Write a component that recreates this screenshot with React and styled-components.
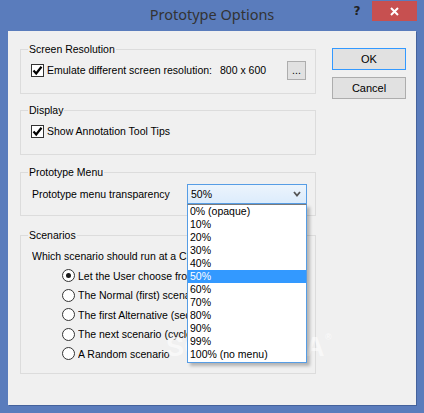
import React from 'react';
import styled, { createGlobalStyle } from 'styled-components';

const GlobalStyle = createGlobalStyle`
  body {
    margin: 0;
    font-family: "Liberation Sans", Arial, sans-serif;
  }
`;

const Window = styled.div`
  width: 424px;
  height: 413px;
  background: #5a7cbc;
  display: flex;
  flex-direction: column;
  box-sizing: border-box;
  padding-bottom: 8px;
`;

const TitleBar = styled.div`
  height: 31px;
  display: grid;
  grid-template-columns: 1fr auto 1fr;
  align-items: start;
`;

const Title = styled.div`
  font-family: "Noto Sans", "Open Sans", sans-serif;
  font-size: 14.5px;
  color: #333;
  padding-top: 4px;
  grid-column: 2;
`;

const Controls = styled.div`
  grid-column: 3;
  display: flex;
  justify-content: flex-end;
  align-items: flex-start;
  padding-top: 1px;
  padding-right: 7px;
`;

const HelpButton = styled.div`
  width: 20px;
  height: 20px;
  margin-right: 5px;
  display: flex;
  align-items: center;
  justify-content: center;
  font-family: "DejaVu Sans", sans-serif;
  font-weight: bold;
  font-size: 12px;
  color: #222;
`;

const CloseButton = styled.div`
  width: 45px;
  height: 20px;
  background: #c75050;
  display: flex;
  align-items: center;
  justify-content: center;
`;

const Client = styled.div`
  flex: 1;
  margin: 0 8px;
  background: #f0f0f0;
  display: flex;
  gap: 16px;
  padding: 18px 0 0 12px;
  position: relative;
  box-shadow: 1px 1px 0 #44629c;
  font-size: 10.5px;
  color: #000;
`;

const LeftColumn = styled.div`
  width: 296px;
  display: flex;
  flex-direction: column;
`;

const RightColumn = styled.div`
  width: 74px;
  display: flex;
  flex-direction: column;
  gap: 7px;
`;

const Group = styled.div`
  position: relative;
  box-sizing: border-box;
  border: 1px solid #dcdcdc;
  margin-top: ${p => p.$top}px;
  height: ${p => p.$height}px;
  padding: 10px 0 0 10px;
  z-index: ${p => p.$layer || 'auto'};
`;

const GroupLabel = styled.span`
  position: absolute;
  top: -7px;
  left: 7px;
  padding: 0 1px;
  background: #f0f0f0;
  line-height: 13px;
`;

const Row = styled.div`
  height: 20px;
  display: flex;
  align-items: center;
  padding-left: ${p => p.$indent || 0}px;
  white-space: nowrap;
`;

const RadioRow = styled(Row)`
  height: 19.5px;
  padding-left: 31px;
`;

const Box = styled.span`
  width: 13px;
  height: 13px;
  box-sizing: border-box;
  border: 1px solid #333;
  background: #fff;
  margin-right: 3px;
  display: flex;
  align-items: center;
  justify-content: center;
  flex: none;
`;

const Circle = styled(Box)`
  border-radius: 50%;
`;

const Dot = styled.span`
  width: 5px;
  height: 5px;
  border-radius: 50%;
  background: #1a1a1a;
`;

const FixedText = styled.span`
  display: inline-block;
  width: ${p => p.$width}px;
  flex: none;
`;

/* text that runs under the open drop-down list is cut at its left edge */
const ClippedText = styled.span`
  display: inline-block;
  max-width: ${p => p.$width}px;
  overflow: hidden;
  white-space: nowrap;
`;

const SmallButton = styled.div`
  width: 19px;
  height: 19px;
  box-sizing: border-box;
  border: 1px solid #adadad;
  background: #e1e1e1;
  display: flex;
  align-items: center;
  justify-content: center;
  line-height: 1;
`;

const Button = styled.div`
  height: 22px;
  box-sizing: border-box;
  border: 1px solid ${p => (p.$default ? '#3399ff' : '#adadad')};
  background: #e1e1e1;
  display: flex;
  align-items: center;
  justify-content: center;
  font-size: 11px;
`;

const SelectWrap = styled.div`
  position: relative;
  width: 120px;
  height: 20px;
`;

const Select = styled.div`
  width: 100%;
  height: 100%;
  box-sizing: border-box;
  border: 1px solid #569de5;
  background: linear-gradient(#ecf4fc, #dcecfc);
  display: flex;
  align-items: center;
  justify-content: space-between;
  padding: 0 5px 0 3px;
`;

const List = styled.div`
  position: absolute;
  top: 20px;
  left: 0;
  width: 120px;
  box-sizing: border-box;
  border: 1px solid #569de5;
  border-top-color: #7a7a7a;
  background: #fff;
  box-shadow: 3px 3px 3px rgba(0, 0, 0, 0.25);
  padding-bottom: 1px;
`;

const Item = styled.div`
  height: 13px;
  line-height: 13px;
  padding-left: 2px;
  background: ${p => (p.$selected ? '#3399ff' : 'transparent')};
  color: ${p => (p.$selected ? '#fff' : '#000')};
`;

const Watermark = styled.div`
  position: absolute;
  left: 158px;
  top: 301px;
  font-family: "Liberation Sans", Arial, sans-serif;
  font-weight: bold;
  font-size: 27px;
  letter-spacing: 0.5px;
  color: rgba(255, 255, 255, 0.6);
  pointer-events: none;
  z-index: 1;
  sup {
    font-size: 9px;
    vertical-align: top;
  }
`;

const Check = () => (
  <svg width="11" height="11" viewBox="0 0 11 11">
    <path d="M1.5 5.5 L4.2 8.5 L9.5 1.8" fill="none" stroke="#000" strokeWidth="2.2" />
  </svg>
);

const options = ['0% (opaque)', '10%', '20%', '30%', '40%', '50%', '60%', '70%', '80%', '90%', '99%', '100% (no menu)'];

const scenarios = [
  'Let the User choose from a list',
  'The Normal (first) scenario',
  'The first Alternative (second) scenario',
  'The next scenario (cycle through)',
  'A Random scenario',
];

export default function App() {
  return (
    <>
      <GlobalStyle />
      <Window>
        <TitleBar>
          <Title>Prototype Options</Title>
          <Controls>
            <HelpButton>?</HelpButton>
            <CloseButton>
              <svg width="9" height="9" viewBox="0 0 9 9">
                <path d="M1 1 L8 8 M8 1 L1 8" stroke="#fff" strokeWidth="2" />
              </svg>
            </CloseButton>
          </Controls>
        </TitleBar>
        <Client>
          <LeftColumn>
            <Group $top={0} $height={45}>
              <GroupLabel>Screen Resolution</GroupLabel>
              <Row>
                <Box><Check /></Box>
                <FixedText $width={173}>Emulate different screen resolution:</FixedText>
                <FixedText $width={67}>800 x 600</FixedText>
                <SmallButton>...</SmallButton>
              </Row>
            </Group>
            <Group $top={16} $height={45}>
              <GroupLabel>Display</GroupLabel>
              <Row>
                <Box><Check /></Box>
                Show Annotation Tool Tips
              </Row>
            </Group>
            <Group $top={17} $height={44} $layer={2}>
              <GroupLabel>Prototype Menu</GroupLabel>
              <Row $indent={1} style={{ paddingTop: 1 }}>
                <FixedText $width={155}>Prototype menu transparency</FixedText>
                <SelectWrap>
                  <Select>
                    <span>50%</span>
                    <svg width="8" height="6" viewBox="0 0 8 6">
                      <path d="M1 1 L4 4.5 L7 1" fill="none" stroke="#555" strokeWidth="1.8" />
                    </svg>
                  </Select>
                  <List>
                    {options.map(o => (
                      <Item key={o} $selected={o === '50%'}>{o}</Item>
                    ))}
                  </List>
                </SelectWrap>
              </Row>
            </Group>
            <Group $top={19} $height={139}>
              <GroupLabel>Scenarios</GroupLabel>
              <Row $indent={1}>
                <ClippedText $width={155}>Which scenario should run at a Click-through?</ClippedText>
              </Row>
              {scenarios.map((s, i) => (
                <RadioRow key={s}>
                  <Circle>{i === 0 && <Dot />}</Circle>
                  <ClippedText $width={109}>{s}</ClippedText>
                </RadioRow>
              ))}
            </Group>
          </LeftColumn>
          <RightColumn>
            <Button $default style={{ marginTop: -1 }}>OK</Button>
            <Button>Cancel</Button>
          </RightColumn>
          <Watermark>SOFTPEDIA<sup>®</sup></Watermark>
        </Client>
      </Window>
    </>
  );
}
